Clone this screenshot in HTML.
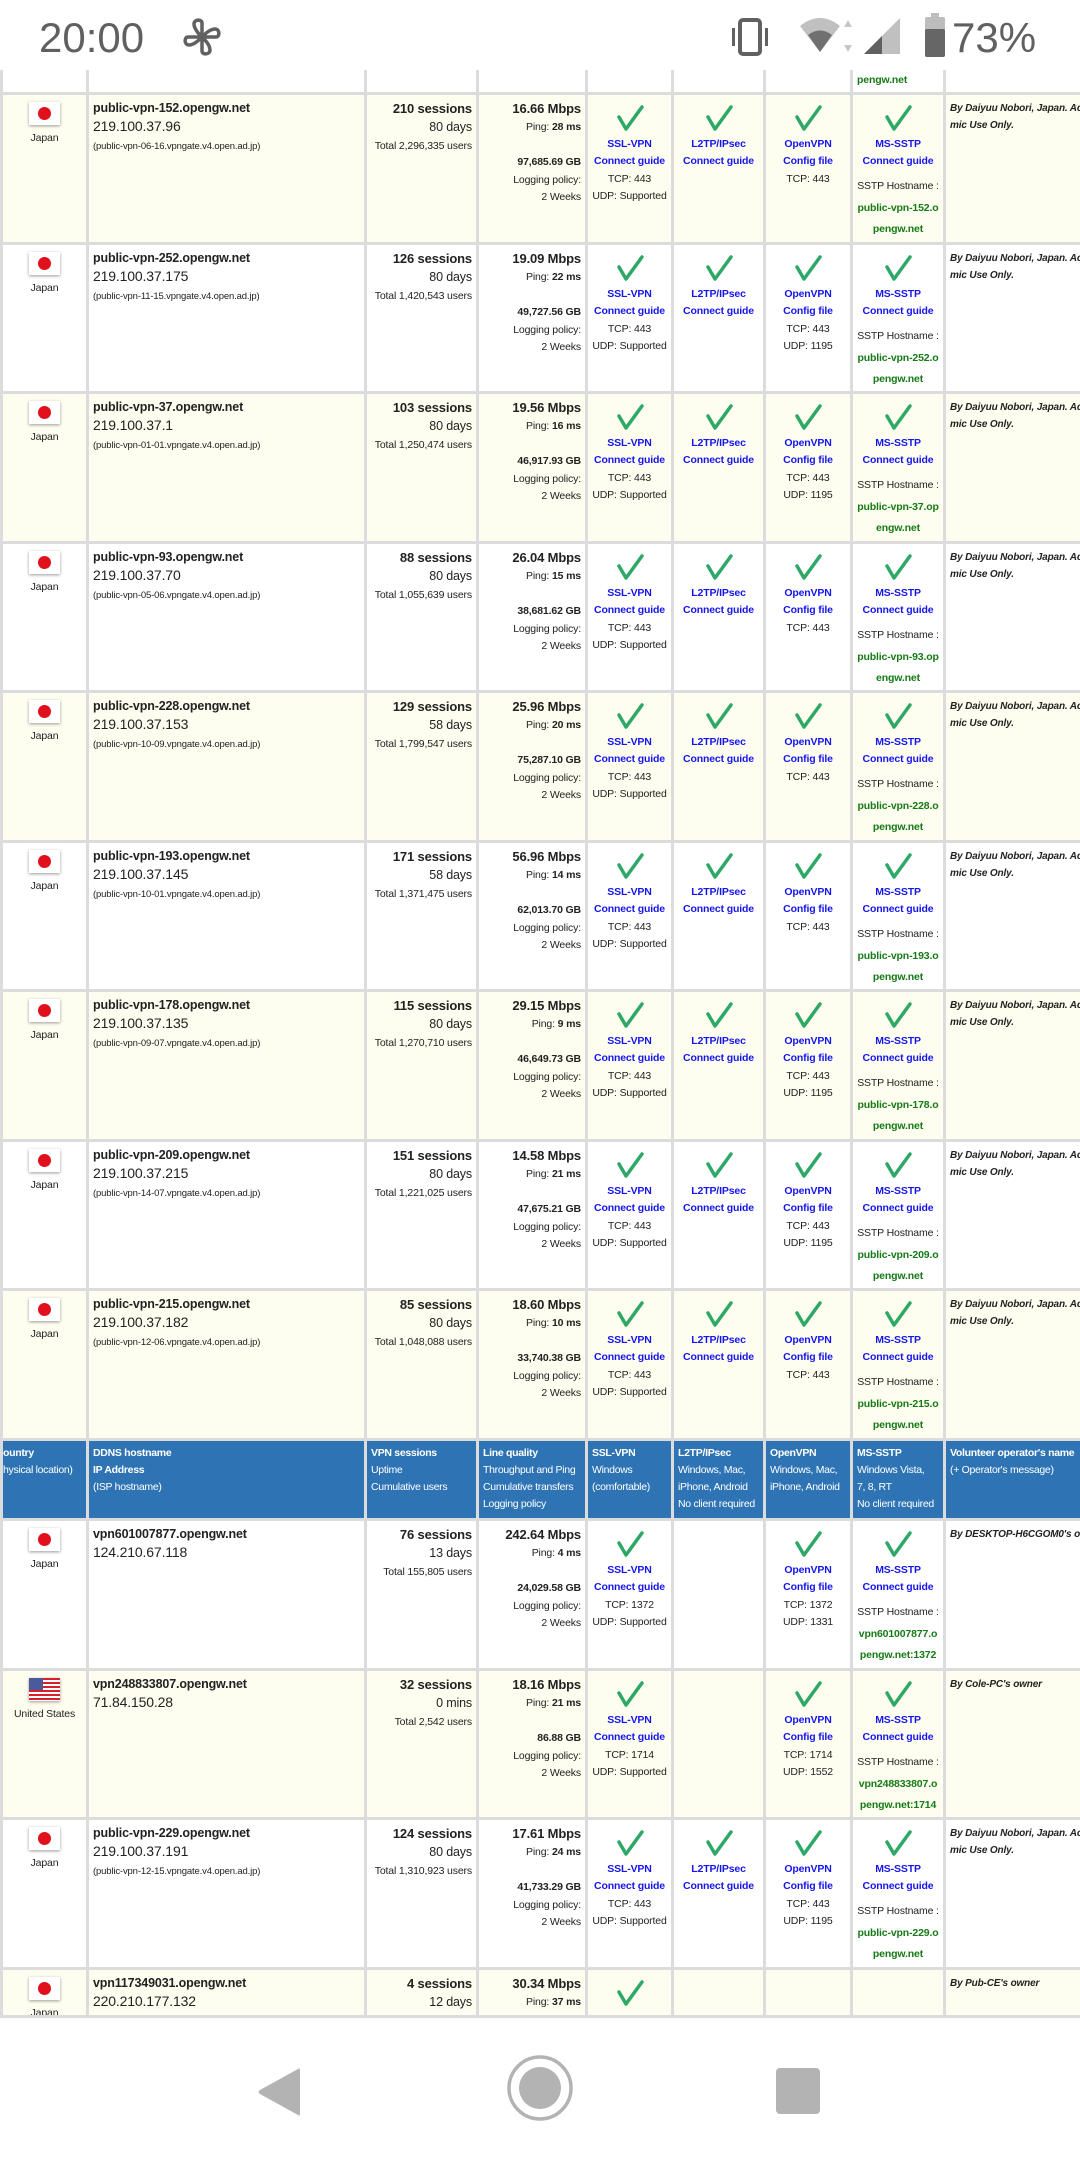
<!DOCTYPE html>
<html><head><meta charset="utf-8"><style>
*{margin:0;padding:0;box-sizing:border-box}
body{width:1080px;height:2160px;background:#fff;font-family:"Liberation Sans",sans-serif;color:#222;overflow:hidden;position:relative}
#sb{position:absolute;left:0;top:0;width:1080px;height:70px;background:#fff}
#wrap{position:absolute;left:0;top:70px;width:1080px;height:1948px;overflow:hidden}
table{border-collapse:collapse;table-layout:fixed;width:1080px}
td{border:3px solid #dcdcdc;vertical-align:top;font-size:10.5px;line-height:17.5px;overflow:hidden;white-space:nowrap;padding:5px 4px 0 4px;letter-spacing:-0.15px}
tr.y td{background:#fefef0}
tr.w td{background:#fff}
tr.r1{height:150px}
tr.r2{height:149px}
td.c{text-align:center;font-size:10.5px;padding-top:7px}
.jp{width:31px;height:23px;margin:0 auto 5px;background:#fff;box-shadow:0 1px 3px rgba(0,0,0,.4);position:relative}
.jp i{position:absolute;left:9px;top:5px;width:13px;height:13px;border-radius:50%;background:#e0101c}
.us{width:31px;height:23px;margin:0 auto 5px;box-shadow:0 1px 3px rgba(0,0,0,.4);background:repeating-linear-gradient(#d8202c 0 2px,#fff 2px 4px);position:relative}
.us i{position:absolute;left:0;top:0;width:14px;height:12px;background:#4a5a9a}
td.h b{font-size:12.5px}
.ip{font-size:14px}
.s{font-size:9.5px}
td.r{text-align:right}
td.r b.m{font-size:13px}
.t{font-size:10.5px}
.d{font-size:12.5px}
td.k{text-align:center;padding-top:9px;padding-left:2px;padding-right:2px}
td.k svg{display:block;margin:0 auto 4px}
td.k a{display:block;color:#1515f0;font-weight:bold;font-size:10.5px;text-decoration:none}
.sh{margin-top:5px;line-height:20px}
.g{color:#157a15;font-weight:bold;line-height:21px;margin-top:2px;font-size:10.5px}
td.o{font-style:italic;font-weight:bold;font-size:10px}
tr.hd td{background:#2e74b5;color:#fff;font-size:10.5px;line-height:17px;height:80px;padding-top:4px;border-color:#dcdcdc;letter-spacing:-0.3px}
#nav{position:absolute;left:0;top:2018px;width:1080px;height:142px;background:#fff}
</style></head><body>
<div id="sb">
<div style="position:absolute;left:39px;top:14px;font-size:42px;color:#606060">20:00</div>
<svg style="position:absolute;left:182px;top:18px" width="40" height="38" viewBox="0 0 40 38"><g fill="none" stroke="#616161" stroke-width="3.5" stroke-linejoin="round"><path d="M20 19 L20 5 C20 1 12 1 12 6 C12 12 20 19 20 19 Z"/><path d="M20 19 L34 19 C38 19 38 11 33 11 C27 11 20 19 20 19 Z"/><path d="M20 19 L20 33 C20 37 28 37 28 32 C28 26 20 19 20 19 Z"/><path d="M20 19 L6 19 C2 19 2 27 7 27 C13 27 20 19 20 19 Z"/></g></svg>
<svg style="position:absolute;left:728px;top:18px" width="44" height="38" viewBox="0 0 44 38"><rect x="12" y="2" width="20" height="34" rx="3" fill="none" stroke="#616161" stroke-width="4"/><rect x="4" y="10" width="3" height="18" fill="#616161"/><rect x="37" y="10" width="3" height="18" fill="#616161"/></svg>
<svg style="position:absolute;left:798px;top:16px" width="60" height="40" viewBox="0 0 60 40"><path d="M2 10 Q22 -6 42 10 L22 36 Z" fill="#c0c0c0"/><path d="M10 19 Q22 10 34 19 L22 36 Z" fill="#707070"/><path d="M50 4 L54 11 L46 11 Z M50 36 L54 29 L46 29 Z" fill="#c8c8c8"/></svg>
<svg style="position:absolute;left:862px;top:16px" width="40" height="40" viewBox="0 0 40 40"><path d="M38 2 L38 38 L2 38 Z" fill="#c0c0c0"/><path d="M20 20 L20 38 L2 38 Z" fill="#606060"/></svg>
<svg style="position:absolute;left:924px;top:13px" width="22" height="44" viewBox="0 0 22 44"><rect x="7" y="0" width="8" height="5" fill="#bdbdbd"/><rect x="1" y="4" width="20" height="40" rx="2" fill="#bdbdbd"/><rect x="1" y="16" width="20" height="28" rx="2" fill="#666"/></svg>
<div style="position:absolute;left:952px;top:14px;font-size:42px;color:#606060">73%</div>
</div>
<div id="wrap"><table>
<colgroup><col style="width:86px"><col style="width:278px"><col style="width:112px"><col style="width:109px"><col style="width:86px"><col style="width:92px"><col style="width:87px"><col style="width:93px"><col style="width:137px"></colgroup>
<tr class="w" style="height:23px"><td style="border-top:0"></td><td style="border-top:0"></td><td style="border-top:0"></td><td style="border-top:0"></td><td style="border-top:0"></td><td style="border-top:0"></td><td style="border-top:0"></td><td style="border-top:0;padding-top:0;line-height:14px"><span class="g" style="display:block;margin:0">pengw.net</span></td><td style="border-top:0"></td></tr>

<tr class="y r1"><td class="c"><div class="jp"><i></i></div>Japan</td><td class="h"><b>public-vpn-152.opengw.net</b><br><span class="ip">219.100.37.96</span><br><span class="s">(public-vpn-06-16.vpngate.v4.open.ad.jp)</span></td><td class="r"><b class="m">210 sessions</b><br><span class="d">80 days</span><br><span class="t">Total 2,296,335 users</span></td><td class="r"><b class="m">16.66 Mbps</b><br>Ping: <b>28 ms</b><br><br><b>97,685.69 GB</b><br>Logging policy:<br>2 Weeks</td><td class="k"><svg width="30" height="28" viewBox="0 0 30 28"><path d="M4 13 L11 25 L27 3" fill="none" stroke="#2ea866" stroke-width="3.5" stroke-linecap="round" stroke-linejoin="round"/></svg><a>SSL-VPN</a><a>Connect guide</a>TCP: 443<br>UDP: Supported</td><td class="k"><svg width="30" height="28" viewBox="0 0 30 28"><path d="M4 13 L11 25 L27 3" fill="none" stroke="#2ea866" stroke-width="3.5" stroke-linecap="round" stroke-linejoin="round"/></svg><a>L2TP/IPsec</a><a>Connect guide</a></td><td class="k"><svg width="30" height="28" viewBox="0 0 30 28"><path d="M4 13 L11 25 L27 3" fill="none" stroke="#2ea866" stroke-width="3.5" stroke-linecap="round" stroke-linejoin="round"/></svg><a>OpenVPN</a><a>Config file</a>TCP: 443</td><td class="k"><svg width="30" height="28" viewBox="0 0 30 28"><path d="M4 13 L11 25 L27 3" fill="none" stroke="#2ea866" stroke-width="3.5" stroke-linecap="round" stroke-linejoin="round"/></svg><a>MS-SSTP</a><a>Connect guide</a><div class="sh">SSTP Hostname :</div><div class="g">public-vpn-152.o<br>pengw.net</div></td><td class="o">By Daiyuu Nobori, Japan. Academic<br>mic Use Only.</td></tr>

<tr class="w r2"><td class="c"><div class="jp"><i></i></div>Japan</td><td class="h"><b>public-vpn-252.opengw.net</b><br><span class="ip">219.100.37.175</span><br><span class="s">(public-vpn-11-15.vpngate.v4.open.ad.jp)</span></td><td class="r"><b class="m">126 sessions</b><br><span class="d">80 days</span><br><span class="t">Total 1,420,543 users</span></td><td class="r"><b class="m">19.09 Mbps</b><br>Ping: <b>22 ms</b><br><br><b>49,727.56 GB</b><br>Logging policy:<br>2 Weeks</td><td class="k"><svg width="30" height="28" viewBox="0 0 30 28"><path d="M4 13 L11 25 L27 3" fill="none" stroke="#2ea866" stroke-width="3.5" stroke-linecap="round" stroke-linejoin="round"/></svg><a>SSL-VPN</a><a>Connect guide</a>TCP: 443<br>UDP: Supported</td><td class="k"><svg width="30" height="28" viewBox="0 0 30 28"><path d="M4 13 L11 25 L27 3" fill="none" stroke="#2ea866" stroke-width="3.5" stroke-linecap="round" stroke-linejoin="round"/></svg><a>L2TP/IPsec</a><a>Connect guide</a></td><td class="k"><svg width="30" height="28" viewBox="0 0 30 28"><path d="M4 13 L11 25 L27 3" fill="none" stroke="#2ea866" stroke-width="3.5" stroke-linecap="round" stroke-linejoin="round"/></svg><a>OpenVPN</a><a>Config file</a>TCP: 443<br>UDP: 1195</td><td class="k"><svg width="30" height="28" viewBox="0 0 30 28"><path d="M4 13 L11 25 L27 3" fill="none" stroke="#2ea866" stroke-width="3.5" stroke-linecap="round" stroke-linejoin="round"/></svg><a>MS-SSTP</a><a>Connect guide</a><div class="sh">SSTP Hostname :</div><div class="g">public-vpn-252.o<br>pengw.net</div></td><td class="o">By Daiyuu Nobori, Japan. Academic<br>mic Use Only.</td></tr>

<tr class="y r1"><td class="c"><div class="jp"><i></i></div>Japan</td><td class="h"><b>public-vpn-37.opengw.net</b><br><span class="ip">219.100.37.1</span><br><span class="s">(public-vpn-01-01.vpngate.v4.open.ad.jp)</span></td><td class="r"><b class="m">103 sessions</b><br><span class="d">80 days</span><br><span class="t">Total 1,250,474 users</span></td><td class="r"><b class="m">19.56 Mbps</b><br>Ping: <b>16 ms</b><br><br><b>46,917.93 GB</b><br>Logging policy:<br>2 Weeks</td><td class="k"><svg width="30" height="28" viewBox="0 0 30 28"><path d="M4 13 L11 25 L27 3" fill="none" stroke="#2ea866" stroke-width="3.5" stroke-linecap="round" stroke-linejoin="round"/></svg><a>SSL-VPN</a><a>Connect guide</a>TCP: 443<br>UDP: Supported</td><td class="k"><svg width="30" height="28" viewBox="0 0 30 28"><path d="M4 13 L11 25 L27 3" fill="none" stroke="#2ea866" stroke-width="3.5" stroke-linecap="round" stroke-linejoin="round"/></svg><a>L2TP/IPsec</a><a>Connect guide</a></td><td class="k"><svg width="30" height="28" viewBox="0 0 30 28"><path d="M4 13 L11 25 L27 3" fill="none" stroke="#2ea866" stroke-width="3.5" stroke-linecap="round" stroke-linejoin="round"/></svg><a>OpenVPN</a><a>Config file</a>TCP: 443<br>UDP: 1195</td><td class="k"><svg width="30" height="28" viewBox="0 0 30 28"><path d="M4 13 L11 25 L27 3" fill="none" stroke="#2ea866" stroke-width="3.5" stroke-linecap="round" stroke-linejoin="round"/></svg><a>MS-SSTP</a><a>Connect guide</a><div class="sh">SSTP Hostname :</div><div class="g">public-vpn-37.op<br>engw.net</div></td><td class="o">By Daiyuu Nobori, Japan. Academic<br>mic Use Only.</td></tr>

<tr class="w r2"><td class="c"><div class="jp"><i></i></div>Japan</td><td class="h"><b>public-vpn-93.opengw.net</b><br><span class="ip">219.100.37.70</span><br><span class="s">(public-vpn-05-06.vpngate.v4.open.ad.jp)</span></td><td class="r"><b class="m">88 sessions</b><br><span class="d">80 days</span><br><span class="t">Total 1,055,639 users</span></td><td class="r"><b class="m">26.04 Mbps</b><br>Ping: <b>15 ms</b><br><br><b>38,681.62 GB</b><br>Logging policy:<br>2 Weeks</td><td class="k"><svg width="30" height="28" viewBox="0 0 30 28"><path d="M4 13 L11 25 L27 3" fill="none" stroke="#2ea866" stroke-width="3.5" stroke-linecap="round" stroke-linejoin="round"/></svg><a>SSL-VPN</a><a>Connect guide</a>TCP: 443<br>UDP: Supported</td><td class="k"><svg width="30" height="28" viewBox="0 0 30 28"><path d="M4 13 L11 25 L27 3" fill="none" stroke="#2ea866" stroke-width="3.5" stroke-linecap="round" stroke-linejoin="round"/></svg><a>L2TP/IPsec</a><a>Connect guide</a></td><td class="k"><svg width="30" height="28" viewBox="0 0 30 28"><path d="M4 13 L11 25 L27 3" fill="none" stroke="#2ea866" stroke-width="3.5" stroke-linecap="round" stroke-linejoin="round"/></svg><a>OpenVPN</a><a>Config file</a>TCP: 443</td><td class="k"><svg width="30" height="28" viewBox="0 0 30 28"><path d="M4 13 L11 25 L27 3" fill="none" stroke="#2ea866" stroke-width="3.5" stroke-linecap="round" stroke-linejoin="round"/></svg><a>MS-SSTP</a><a>Connect guide</a><div class="sh">SSTP Hostname :</div><div class="g">public-vpn-93.op<br>engw.net</div></td><td class="o">By Daiyuu Nobori, Japan. Academic<br>mic Use Only.</td></tr>

<tr class="y r1"><td class="c"><div class="jp"><i></i></div>Japan</td><td class="h"><b>public-vpn-228.opengw.net</b><br><span class="ip">219.100.37.153</span><br><span class="s">(public-vpn-10-09.vpngate.v4.open.ad.jp)</span></td><td class="r"><b class="m">129 sessions</b><br><span class="d">58 days</span><br><span class="t">Total 1,799,547 users</span></td><td class="r"><b class="m">25.96 Mbps</b><br>Ping: <b>20 ms</b><br><br><b>75,287.10 GB</b><br>Logging policy:<br>2 Weeks</td><td class="k"><svg width="30" height="28" viewBox="0 0 30 28"><path d="M4 13 L11 25 L27 3" fill="none" stroke="#2ea866" stroke-width="3.5" stroke-linecap="round" stroke-linejoin="round"/></svg><a>SSL-VPN</a><a>Connect guide</a>TCP: 443<br>UDP: Supported</td><td class="k"><svg width="30" height="28" viewBox="0 0 30 28"><path d="M4 13 L11 25 L27 3" fill="none" stroke="#2ea866" stroke-width="3.5" stroke-linecap="round" stroke-linejoin="round"/></svg><a>L2TP/IPsec</a><a>Connect guide</a></td><td class="k"><svg width="30" height="28" viewBox="0 0 30 28"><path d="M4 13 L11 25 L27 3" fill="none" stroke="#2ea866" stroke-width="3.5" stroke-linecap="round" stroke-linejoin="round"/></svg><a>OpenVPN</a><a>Config file</a>TCP: 443</td><td class="k"><svg width="30" height="28" viewBox="0 0 30 28"><path d="M4 13 L11 25 L27 3" fill="none" stroke="#2ea866" stroke-width="3.5" stroke-linecap="round" stroke-linejoin="round"/></svg><a>MS-SSTP</a><a>Connect guide</a><div class="sh">SSTP Hostname :</div><div class="g">public-vpn-228.o<br>pengw.net</div></td><td class="o">By Daiyuu Nobori, Japan. Academic<br>mic Use Only.</td></tr>

<tr class="w r2"><td class="c"><div class="jp"><i></i></div>Japan</td><td class="h"><b>public-vpn-193.opengw.net</b><br><span class="ip">219.100.37.145</span><br><span class="s">(public-vpn-10-01.vpngate.v4.open.ad.jp)</span></td><td class="r"><b class="m">171 sessions</b><br><span class="d">58 days</span><br><span class="t">Total 1,371,475 users</span></td><td class="r"><b class="m">56.96 Mbps</b><br>Ping: <b>14 ms</b><br><br><b>62,013.70 GB</b><br>Logging policy:<br>2 Weeks</td><td class="k"><svg width="30" height="28" viewBox="0 0 30 28"><path d="M4 13 L11 25 L27 3" fill="none" stroke="#2ea866" stroke-width="3.5" stroke-linecap="round" stroke-linejoin="round"/></svg><a>SSL-VPN</a><a>Connect guide</a>TCP: 443<br>UDP: Supported</td><td class="k"><svg width="30" height="28" viewBox="0 0 30 28"><path d="M4 13 L11 25 L27 3" fill="none" stroke="#2ea866" stroke-width="3.5" stroke-linecap="round" stroke-linejoin="round"/></svg><a>L2TP/IPsec</a><a>Connect guide</a></td><td class="k"><svg width="30" height="28" viewBox="0 0 30 28"><path d="M4 13 L11 25 L27 3" fill="none" stroke="#2ea866" stroke-width="3.5" stroke-linecap="round" stroke-linejoin="round"/></svg><a>OpenVPN</a><a>Config file</a>TCP: 443</td><td class="k"><svg width="30" height="28" viewBox="0 0 30 28"><path d="M4 13 L11 25 L27 3" fill="none" stroke="#2ea866" stroke-width="3.5" stroke-linecap="round" stroke-linejoin="round"/></svg><a>MS-SSTP</a><a>Connect guide</a><div class="sh">SSTP Hostname :</div><div class="g">public-vpn-193.o<br>pengw.net</div></td><td class="o">By Daiyuu Nobori, Japan. Academic<br>mic Use Only.</td></tr>

<tr class="y r1"><td class="c"><div class="jp"><i></i></div>Japan</td><td class="h"><b>public-vpn-178.opengw.net</b><br><span class="ip">219.100.37.135</span><br><span class="s">(public-vpn-09-07.vpngate.v4.open.ad.jp)</span></td><td class="r"><b class="m">115 sessions</b><br><span class="d">80 days</span><br><span class="t">Total 1,270,710 users</span></td><td class="r"><b class="m">29.15 Mbps</b><br>Ping: <b>9 ms</b><br><br><b>46,649.73 GB</b><br>Logging policy:<br>2 Weeks</td><td class="k"><svg width="30" height="28" viewBox="0 0 30 28"><path d="M4 13 L11 25 L27 3" fill="none" stroke="#2ea866" stroke-width="3.5" stroke-linecap="round" stroke-linejoin="round"/></svg><a>SSL-VPN</a><a>Connect guide</a>TCP: 443<br>UDP: Supported</td><td class="k"><svg width="30" height="28" viewBox="0 0 30 28"><path d="M4 13 L11 25 L27 3" fill="none" stroke="#2ea866" stroke-width="3.5" stroke-linecap="round" stroke-linejoin="round"/></svg><a>L2TP/IPsec</a><a>Connect guide</a></td><td class="k"><svg width="30" height="28" viewBox="0 0 30 28"><path d="M4 13 L11 25 L27 3" fill="none" stroke="#2ea866" stroke-width="3.5" stroke-linecap="round" stroke-linejoin="round"/></svg><a>OpenVPN</a><a>Config file</a>TCP: 443<br>UDP: 1195</td><td class="k"><svg width="30" height="28" viewBox="0 0 30 28"><path d="M4 13 L11 25 L27 3" fill="none" stroke="#2ea866" stroke-width="3.5" stroke-linecap="round" stroke-linejoin="round"/></svg><a>MS-SSTP</a><a>Connect guide</a><div class="sh">SSTP Hostname :</div><div class="g">public-vpn-178.o<br>pengw.net</div></td><td class="o">By Daiyuu Nobori, Japan. Academic<br>mic Use Only.</td></tr>

<tr class="w r2"><td class="c"><div class="jp"><i></i></div>Japan</td><td class="h"><b>public-vpn-209.opengw.net</b><br><span class="ip">219.100.37.215</span><br><span class="s">(public-vpn-14-07.vpngate.v4.open.ad.jp)</span></td><td class="r"><b class="m">151 sessions</b><br><span class="d">80 days</span><br><span class="t">Total 1,221,025 users</span></td><td class="r"><b class="m">14.58 Mbps</b><br>Ping: <b>21 ms</b><br><br><b>47,675.21 GB</b><br>Logging policy:<br>2 Weeks</td><td class="k"><svg width="30" height="28" viewBox="0 0 30 28"><path d="M4 13 L11 25 L27 3" fill="none" stroke="#2ea866" stroke-width="3.5" stroke-linecap="round" stroke-linejoin="round"/></svg><a>SSL-VPN</a><a>Connect guide</a>TCP: 443<br>UDP: Supported</td><td class="k"><svg width="30" height="28" viewBox="0 0 30 28"><path d="M4 13 L11 25 L27 3" fill="none" stroke="#2ea866" stroke-width="3.5" stroke-linecap="round" stroke-linejoin="round"/></svg><a>L2TP/IPsec</a><a>Connect guide</a></td><td class="k"><svg width="30" height="28" viewBox="0 0 30 28"><path d="M4 13 L11 25 L27 3" fill="none" stroke="#2ea866" stroke-width="3.5" stroke-linecap="round" stroke-linejoin="round"/></svg><a>OpenVPN</a><a>Config file</a>TCP: 443<br>UDP: 1195</td><td class="k"><svg width="30" height="28" viewBox="0 0 30 28"><path d="M4 13 L11 25 L27 3" fill="none" stroke="#2ea866" stroke-width="3.5" stroke-linecap="round" stroke-linejoin="round"/></svg><a>MS-SSTP</a><a>Connect guide</a><div class="sh">SSTP Hostname :</div><div class="g">public-vpn-209.o<br>pengw.net</div></td><td class="o">By Daiyuu Nobori, Japan. Academic<br>mic Use Only.</td></tr>

<tr class="y r1"><td class="c"><div class="jp"><i></i></div>Japan</td><td class="h"><b>public-vpn-215.opengw.net</b><br><span class="ip">219.100.37.182</span><br><span class="s">(public-vpn-12-06.vpngate.v4.open.ad.jp)</span></td><td class="r"><b class="m">85 sessions</b><br><span class="d">80 days</span><br><span class="t">Total 1,048,088 users</span></td><td class="r"><b class="m">18.60 Mbps</b><br>Ping: <b>10 ms</b><br><br><b>33,740.38 GB</b><br>Logging policy:<br>2 Weeks</td><td class="k"><svg width="30" height="28" viewBox="0 0 30 28"><path d="M4 13 L11 25 L27 3" fill="none" stroke="#2ea866" stroke-width="3.5" stroke-linecap="round" stroke-linejoin="round"/></svg><a>SSL-VPN</a><a>Connect guide</a>TCP: 443<br>UDP: Supported</td><td class="k"><svg width="30" height="28" viewBox="0 0 30 28"><path d="M4 13 L11 25 L27 3" fill="none" stroke="#2ea866" stroke-width="3.5" stroke-linecap="round" stroke-linejoin="round"/></svg><a>L2TP/IPsec</a><a>Connect guide</a></td><td class="k"><svg width="30" height="28" viewBox="0 0 30 28"><path d="M4 13 L11 25 L27 3" fill="none" stroke="#2ea866" stroke-width="3.5" stroke-linecap="round" stroke-linejoin="round"/></svg><a>OpenVPN</a><a>Config file</a>TCP: 443</td><td class="k"><svg width="30" height="28" viewBox="0 0 30 28"><path d="M4 13 L11 25 L27 3" fill="none" stroke="#2ea866" stroke-width="3.5" stroke-linecap="round" stroke-linejoin="round"/></svg><a>MS-SSTP</a><a>Connect guide</a><div class="sh">SSTP Hostname :</div><div class="g">public-vpn-215.o<br>pengw.net</div></td><td class="o">By Daiyuu Nobori, Japan. Academic<br>mic Use Only.</td></tr>

<tr class="hd"><td style="padding-left:0"><b>ountry</b><br>hysical location)</td><td><b>DDNS hostname</b><br><b>IP Address</b><br>(ISP hostname)</td><td><b>VPN sessions</b><br>Uptime<br>Cumulative users</td><td><b>Line quality</b><br>Throughput and Ping<br>Cumulative transfers<br>Logging policy</td><td><b>SSL-VPN</b><br>Windows<br>(comfortable)</td><td><b>L2TP/IPsec</b><br>Windows, Mac,<br>iPhone, Android<br>No client required</td><td><b>OpenVPN</b><br>Windows, Mac,<br>iPhone, Android</td><td><b>MS-SSTP</b><br>Windows Vista,<br>7, 8, RT<br>No client required</td><td><b>Volunteer operator's name</b><br>(+ Operator's message)</td></tr>

<tr class="w r1"><td class="c"><div class="jp"><i></i></div>Japan</td><td class="h"><b>vpn601007877.opengw.net</b><br><span class="ip">124.210.67.118</span></td><td class="r"><b class="m">76 sessions</b><br><span class="d">13 days</span><br><span class="t">Total 155,805 users</span></td><td class="r"><b class="m">242.64 Mbps</b><br>Ping: <b>4 ms</b><br><br><b>24,029.58 GB</b><br>Logging policy:<br>2 Weeks</td><td class="k"><svg width="30" height="28" viewBox="0 0 30 28"><path d="M4 13 L11 25 L27 3" fill="none" stroke="#2ea866" stroke-width="3.5" stroke-linecap="round" stroke-linejoin="round"/></svg><a>SSL-VPN</a><a>Connect guide</a>TCP: 1372<br>UDP: Supported</td><td class="k"></td><td class="k"><svg width="30" height="28" viewBox="0 0 30 28"><path d="M4 13 L11 25 L27 3" fill="none" stroke="#2ea866" stroke-width="3.5" stroke-linecap="round" stroke-linejoin="round"/></svg><a>OpenVPN</a><a>Config file</a>TCP: 1372<br>UDP: 1331</td><td class="k"><svg width="30" height="28" viewBox="0 0 30 28"><path d="M4 13 L11 25 L27 3" fill="none" stroke="#2ea866" stroke-width="3.5" stroke-linecap="round" stroke-linejoin="round"/></svg><a>MS-SSTP</a><a>Connect guide</a><div class="sh">SSTP Hostname :</div><div class="g">vpn601007877.o<br>pengw.net:1372</div></td><td class="o">By DESKTOP-H6CGOM0's owner</td></tr>

<tr class="y r2"><td class="c"><div class="us"><i></i></div>United States</td><td class="h"><b>vpn248833807.opengw.net</b><br><span class="ip">71.84.150.28</span></td><td class="r"><b class="m">32 sessions</b><br><span class="d">0 mins</span><br><span class="t">Total 2,542 users</span></td><td class="r"><b class="m">18.16 Mbps</b><br>Ping: <b>21 ms</b><br><br><b>86.88 GB</b><br>Logging policy:<br>2 Weeks</td><td class="k"><svg width="30" height="28" viewBox="0 0 30 28"><path d="M4 13 L11 25 L27 3" fill="none" stroke="#2ea866" stroke-width="3.5" stroke-linecap="round" stroke-linejoin="round"/></svg><a>SSL-VPN</a><a>Connect guide</a>TCP: 1714<br>UDP: Supported</td><td class="k"></td><td class="k"><svg width="30" height="28" viewBox="0 0 30 28"><path d="M4 13 L11 25 L27 3" fill="none" stroke="#2ea866" stroke-width="3.5" stroke-linecap="round" stroke-linejoin="round"/></svg><a>OpenVPN</a><a>Config file</a>TCP: 1714<br>UDP: 1552</td><td class="k"><svg width="30" height="28" viewBox="0 0 30 28"><path d="M4 13 L11 25 L27 3" fill="none" stroke="#2ea866" stroke-width="3.5" stroke-linecap="round" stroke-linejoin="round"/></svg><a>MS-SSTP</a><a>Connect guide</a><div class="sh">SSTP Hostname :</div><div class="g">vpn248833807.o<br>pengw.net:1714</div></td><td class="o">By Cole-PC's owner</td></tr>

<tr class="w r1"><td class="c"><div class="jp"><i></i></div>Japan</td><td class="h"><b>public-vpn-229.opengw.net</b><br><span class="ip">219.100.37.191</span><br><span class="s">(public-vpn-12-15.vpngate.v4.open.ad.jp)</span></td><td class="r"><b class="m">124 sessions</b><br><span class="d">80 days</span><br><span class="t">Total 1,310,923 users</span></td><td class="r"><b class="m">17.61 Mbps</b><br>Ping: <b>24 ms</b><br><br><b>41,733.29 GB</b><br>Logging policy:<br>2 Weeks</td><td class="k"><svg width="30" height="28" viewBox="0 0 30 28"><path d="M4 13 L11 25 L27 3" fill="none" stroke="#2ea866" stroke-width="3.5" stroke-linecap="round" stroke-linejoin="round"/></svg><a>SSL-VPN</a><a>Connect guide</a>TCP: 443<br>UDP: Supported</td><td class="k"><svg width="30" height="28" viewBox="0 0 30 28"><path d="M4 13 L11 25 L27 3" fill="none" stroke="#2ea866" stroke-width="3.5" stroke-linecap="round" stroke-linejoin="round"/></svg><a>L2TP/IPsec</a><a>Connect guide</a></td><td class="k"><svg width="30" height="28" viewBox="0 0 30 28"><path d="M4 13 L11 25 L27 3" fill="none" stroke="#2ea866" stroke-width="3.5" stroke-linecap="round" stroke-linejoin="round"/></svg><a>OpenVPN</a><a>Config file</a>TCP: 443<br>UDP: 1195</td><td class="k"><svg width="30" height="28" viewBox="0 0 30 28"><path d="M4 13 L11 25 L27 3" fill="none" stroke="#2ea866" stroke-width="3.5" stroke-linecap="round" stroke-linejoin="round"/></svg><a>MS-SSTP</a><a>Connect guide</a><div class="sh">SSTP Hostname :</div><div class="g">public-vpn-229.o<br>pengw.net</div></td><td class="o">By Daiyuu Nobori, Japan. Academic<br>mic Use Only.</td></tr>

<tr class="y r2"><td class="c"><div class="jp"><i></i></div>Japan</td><td class="h"><b>vpn117349031.opengw.net</b><br><span class="ip">220.210.177.132</span><br><span class="s">(132.177.210.220.dy.bbexcite.jp)</span></td><td class="r"><b class="m">4 sessions</b><br><span class="d">12 days</span><br><span class="t">Total 7,895 users</span></td><td class="r"><b class="m">30.34 Mbps</b><br>Ping: <b>37 ms</b><br><br><b>1,234.56 GB</b><br>Logging policy:<br>2 Weeks</td><td class="k"><svg width="30" height="28" viewBox="0 0 30 28"><path d="M4 13 L11 25 L27 3" fill="none" stroke="#2ea866" stroke-width="3.5" stroke-linecap="round" stroke-linejoin="round"/></svg><a>SSL-VPN</a><a>Connect guide</a></td><td class="k"></td><td class="k"></td><td class="k"></td><td class="o">By Pub-CE's owner</td></tr>
</table>
<div style="position:absolute;left:0;top:1945px;width:1080px;height:3px;background:#dcdcdc"></div>
</div>
<div id="nav">
<svg style="position:absolute;left:256px;top:48px" width="46" height="52" viewBox="0 0 46 52"><path d="M42 3 Q44 1 44 5 L44 47 Q44 51 42 49 L4 28 Q1 26 4 24 Z" fill="#b3b3b3"/></svg>
<svg style="position:absolute;left:506px;top:36px" width="68" height="68" viewBox="0 0 68 68"><circle cx="34" cy="34" r="31" fill="none" stroke="#b3b3b3" stroke-width="3.5"/><circle cx="34" cy="34" r="21" fill="#b3b3b3"/></svg>
<div style="position:absolute;left:776px;top:50px;width:44px;height:46px;border-radius:4px;background:#b3b3b3"></div>
</div>
</body></html>
